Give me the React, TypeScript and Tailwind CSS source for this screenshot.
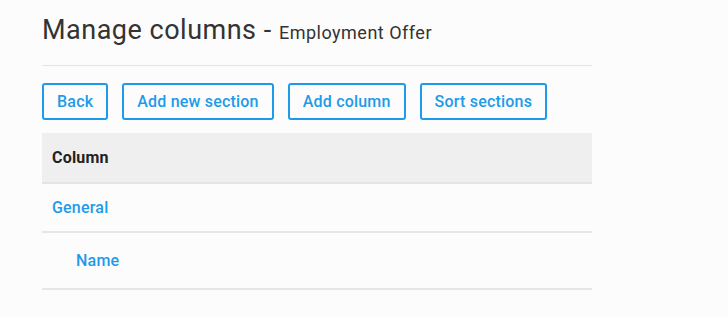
export default function App() {
  const buttons = ['Back', 'Add new section', 'Add column', 'Sort sections']

  return (
    <div className="min-h-[318px] bg-[#fcfcfc] font-['Roboto',sans-serif]">
      <div className="w-[550px] ml-[42px] pt-[12px]">
        {/* Page title */}
        <div className="pb-[14px] border-b border-[#e4e4e4]">
          <h1 className="text-[27px] leading-[36px] tracking-[0.5px] text-[#333]">
            Manage columns -{' '}
            <span className="text-[18px] tracking-[0.5px] text-[#333]">Employment Offer</span>
          </h1>
        </div>

        {/* Actions */}
        <div className="flex gap-[14px] pt-[17px] pb-[13px]">
          {buttons.map((label) => (
            <button
              key={label}
              className="h-[37px] px-[13px] rounded-[3px] border-2 border-[#1e9be8] text-[#1e9be8] text-[16px] tracking-[0.2px] font-medium"
            >
              {label}
            </button>
          ))}
        </div>

        {/* Columns table */}
        <div className="text-[16px] tracking-[0.2px]">
          <div className="h-[51px] flex items-center px-[10px] bg-[#efefef] border-b-2 border-[#e4e4e4] font-bold text-[#222]">
            Column
          </div>
          <div className="h-[49px] flex items-center px-[10px] border-b-2 border-[#e6e6e6] font-medium text-[#1e9be8]">
            General
          </div>
          <div className="h-[57px] flex items-center pl-[34px] border-b-2 border-[#e6e6e6] font-medium text-[#1e9be8]">
            Name
          </div>
        </div>
      </div>
    </div>
  )
}
